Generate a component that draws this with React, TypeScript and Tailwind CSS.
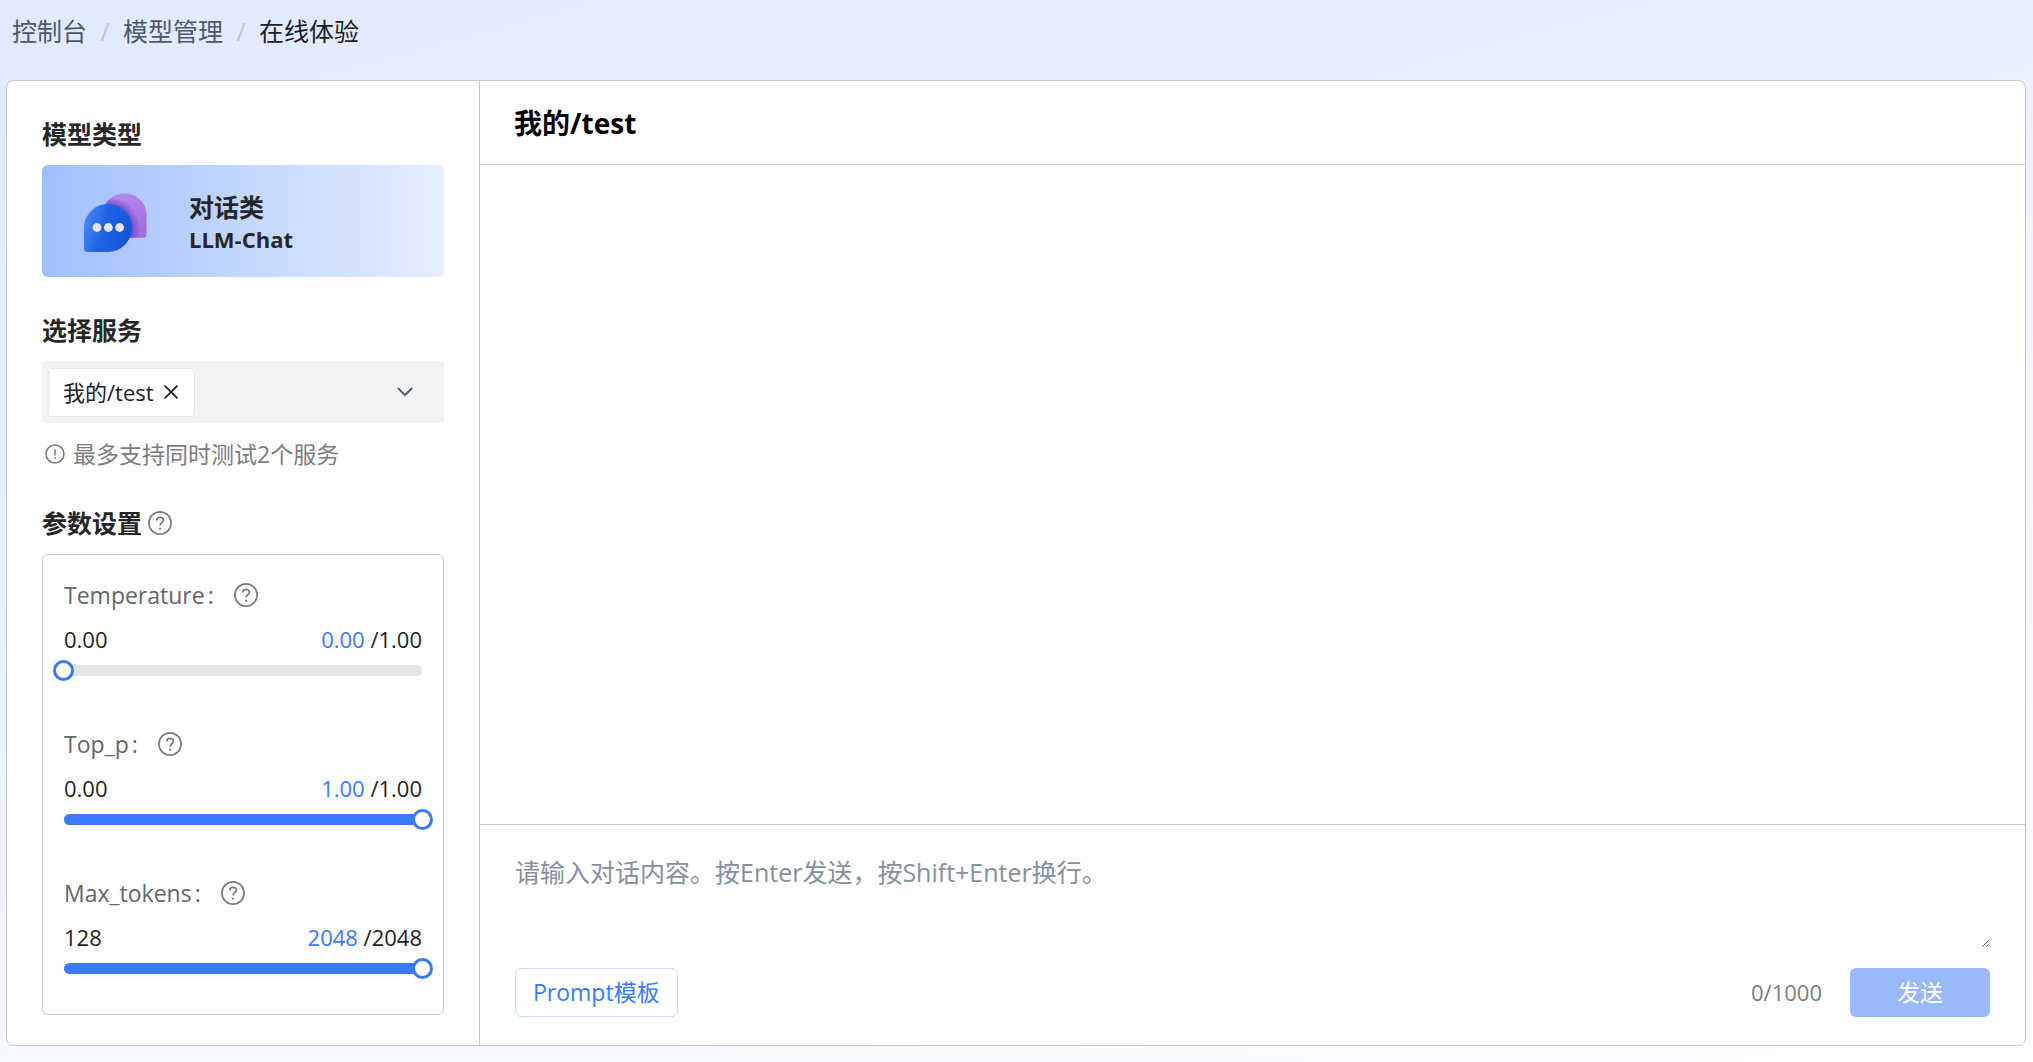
import { useState } from "react";

function HelpIcon() {
  return (
    <svg viewBox="0 0 24 24" className="size-6 shrink-0" fill="none" stroke="#7d7d7d" strokeWidth="1.7" aria-hidden="true">
      <circle cx="12" cy="12" r="11.1" />
      <path d="M8.7 9.6c0-2 1.4-3.3 3.3-3.3s3.4 1.2 3.4 3c0 2.4-3.3 2.5-3.3 5.2" />
      <circle cx="12.1" cy="17.7" r="1.1" fill="#7d7d7d" stroke="none" />
    </svg>
  );
}

function InfoIcon() {
  return (
    <svg viewBox="0 0 20 20" className="size-5 shrink-0" fill="none" stroke="#7d7d7d" strokeWidth="1.6" aria-hidden="true">
      <circle cx="10" cy="10" r="9" />
      <path d="M10 5.2v6.4" />
      <circle cx="10" cy="14" r="1" fill="#7d7d7d" stroke="none" />
    </svg>
  );
}

function ChatLogo() {
  return (
    <svg viewBox="0 0 66 62" className="h-[62px] w-[66px] shrink-0" aria-hidden="true">
      <defs>
        <linearGradient id="bubbleBlue" x1="0" y1="0.4" x2="1" y2="0.7">
          <stop offset="0" stopColor="#4485f3" />
          <stop offset="0.4" stopColor="#1f63e4" />
          <stop offset="1" stopColor="#1553d8" />
        </linearGradient>
        <linearGradient id="bubblePurple" x1="0.3" y1="0" x2="0.7" y2="1">
          <stop offset="0" stopColor="#b887ec" />
          <stop offset="1" stopColor="#a06ee2" />
        </linearGradient>
        <radialGradient id="bubbleShade" gradientUnits="userSpaceOnUse" cx="27" cy="36" r="31">
          <stop offset="0.75" stopColor="#5a35b8" stopOpacity="0.6" />
          <stop offset="1" stopColor="#5a35b8" stopOpacity="0" />
        </radialGradient>
      </defs>
      <path d="M42.500 1.500C54.700 1.500 64.500 11 64.500 23V42.500Q64.500 45.700 61.300 45.700H42.500C30 45.700 20.500 36 20.500 23.500S30 1.500 42.500 1.500Z" fill="url(#bubblePurple)" />
      <path d="M42.500 1.500C54.700 1.500 64.500 11 64.500 23V42.500Q64.500 45.700 61.300 45.700H42.500C30 45.700 20.500 36 20.500 23.500S30 1.500 42.500 1.500Z" fill="url(#bubbleShade)" />
      <path d="M26 12C39.300 12 50 22.500 50 35.500S39.300 60 26 60H5Q2 60 2 57V36C2 22.500 12.700 12 26 12Z" fill="url(#bubbleBlue)" />
      <g fill="#e6e6ea">
        <circle cx="15" cy="35.500" r="4.400" />
        <circle cx="26.300" cy="35.500" r="4.400" />
        <circle cx="37.600" cy="35.500" r="4.400" />
      </g>
    </svg>
  );
}

type Param = { id: string; label: string; min: number; max: number; initial: number; digits: number };

const PARAMS: Param[] = [
  { id: "temperature", label: "Temperature", min: 0, max: 1, initial: 0, digits: 2 },
  { id: "top_p", label: "Top_p", min: 0, max: 1, initial: 1, digits: 2 },
  { id: "max_tokens", label: "Max_tokens", min: 128, max: 2048, initial: 2048, digits: 0 },
];

function ParamSlider({ param }: { param: Param }) {
  const [value, setValue] = useState(param.initial);
  const percent = ((value - param.min) / (param.max - param.min)) * 100;
  return (
    <div>
      <div className="flex h-9 items-center gap-5">
        <label htmlFor={param.id} className="text-[23px] leading-8 text-[#666]">
          {param.label}<span className="pl-[3px]">:</span>
        </label>
        <HelpIcon />
      </div>
      <div className="mt-2 flex h-9 items-center justify-between text-[22px] text-[#1f1f1f]">
        <span>{param.min.toFixed(param.digits)}</span>
        <span>
          <span className="text-[#3a7afe]">{value.toFixed(param.digits)}</span> /{param.max.toFixed(param.digits)}
        </span>
      </div>
      <div className="relative mt-2 h-[11px] rounded-full bg-[#e5e5e5]">
        <div className="h-full rounded-full bg-[#3a7afe]" style={{ width: `${percent}%` }} />
        <input
          id={param.id}
          type="range"
          min={param.min}
          max={param.max}
          step={param.digits ? 0.01 : 1}
          value={value}
          onChange={(e) => setValue(Number(e.target.value))}
          className="absolute -top-[5px] -left-[11px] h-[21px] w-[calc(100%+22px)] cursor-pointer appearance-none bg-transparent [&::-webkit-slider-thumb]:size-[21px] [&::-webkit-slider-thumb]:appearance-none [&::-webkit-slider-thumb]:rounded-full [&::-webkit-slider-thumb]:border-[3px] [&::-webkit-slider-thumb]:border-[#3a7afe] [&::-webkit-slider-thumb]:bg-white"
        />
      </div>
    </div>
  );
}

export default function App() {
  const [text, setText] = useState("");
  const [picked, setPicked] = useState(true);
  return (
    <div className="flex min-h-screen flex-col bg-[linear-gradient(165deg,#e0eafe,#fdfeff)] pr-[7px] pb-4 pl-[6px] font-['Open_Sans','Noto_Sans_CJK_SC',sans-serif]">
      <nav aria-label="面包屑" className="flex h-20 items-start pt-[11px] pl-[6px] text-[25px] leading-10 text-[#4e5969]">
        <a href="#console">控制台</a>
        <span className="w-9 text-center text-[#c2c6ce]">/</span>
        <a href="#models">模型管理</a>
        <span className="w-9 text-center text-[#c2c6ce]">/</span>
        <span className="text-[#1d2129]" aria-current="page">在线体验</span>
      </nav>

      <div className="flex flex-1 overflow-hidden rounded-lg border border-[#c9c9c9] bg-white">
        <aside className="w-[473px] shrink-0 border-r border-[#c9c9c9] px-[35px] pt-[35px]">
          <h2 className="text-[25px] leading-9 font-bold text-[#262626]">模型类型</h2>
          <button type="button" className="mt-[13px] flex h-28 w-full items-center rounded-md bg-linear-to-r from-[#a0bfff] to-[#e6eeff] pt-1 pl-10 text-left text-[#262626]">
            <ChatLogo />
            <span className="ml-[41px] text-[25px] leading-8 font-bold">
              对话类
              <span className="block text-[22px]">LLM-Chat</span>
            </span>
          </button>

          <h2 className="mt-[35px] text-[25px] leading-9 font-bold text-[#262626]">选择服务</h2>
          <div className="relative mt-[13px] flex h-[62px] items-center rounded bg-[#f2f3f5] pl-[6px]">
            {picked && (
              <span className="flex h-[49px] shrink-0 items-center rounded-sm border border-[#e5e6eb] bg-white px-[14px] text-[22px] text-[#1d2129]">
                我的/test
                <button type="button" aria-label="移除" onClick={() => setPicked(false)} className="ml-2 p-[2px]">
                  <svg viewBox="0 0 14 14" className="size-[14px]" fill="none" stroke="#1d2129" strokeWidth="1.7" aria-hidden="true">
                    <path d="M.5.5l13 13M13.500.5l-13 13" />
                  </svg>
                </button>
              </span>
            )}
            <select aria-label="选择服务" className="h-full flex-1 cursor-pointer appearance-none bg-transparent outline-none" defaultValue="" onChange={() => setPicked(true)}>
              <option value="" />
              <option value="test">我的/test</option>
            </select>
            <svg viewBox="0 0 16 10" className="pointer-events-none absolute right-[31px] h-[10px] w-4" fill="none" stroke="#4e5969" strokeWidth="1.8" aria-hidden="true">
              <path d="M1 1l7 7.200L15 1" />
            </svg>
          </div>
          <p className="mt-[13px] flex h-9 items-center gap-2 pl-[3px] text-[23px] text-[#7d7d7d]">
            <InfoIcon />
            最多支持同时测试2个服务
          </p>

          <div className="mt-[33px] flex h-9 items-center gap-[6px]">
            <h2 className="text-[25px] leading-9 font-bold text-[#262626]">参数设置</h2>
            <HelpIcon />
          </div>
          <div className="mt-[13px] flex flex-col gap-[50px] rounded-md border border-[#c9c9c9] px-[21px] pt-[22px] pb-10">
            {PARAMS.map((p) => (
              <ParamSlider key={p.id} param={p} />
            ))}
          </div>
        </aside>

        <main className="flex min-w-0 flex-1 flex-col">
          <header className="flex h-[84px] items-center border-b border-[#c9c9c9] px-[34px]">
            <h1 className="text-[28px] font-bold text-black">我的/test</h1>
          </header>
          <section aria-label="对话" className="flex-1" />
          <form className="border-t border-[#c9c9c9] px-[35px] pt-[27px] pb-7" onSubmit={(e) => e.preventDefault()}>
            <textarea
              aria-label="对话内容"
              maxLength={1000}
              value={text}
              onChange={(e) => setText(e.target.value)}
              placeholder="请输入对话内容。按Enter发送，按Shift+Enter换行。"
              className="block h-24 w-full resize-y text-[25px] leading-10 text-[#1d2129] outline-none placeholder:text-[#86909c]"
            />
            <div className="mt-5 flex items-center">
              <button type="button" className="h-[49px] rounded-md border border-[#c8dbff] px-[17px] text-[23px] text-[#3a7afe]">Prompt模板</button>
              <span className="ml-auto text-[22px] text-[#7d7d7d]">{text.length}/1000</span>
              <button type="submit" className="ml-7 h-[49px] w-[140px] rounded-md bg-[#9ab9fd] text-[23px] text-white">发送</button>
            </div>
          </form>
        </main>
      </div>
    </div>
  );
}
